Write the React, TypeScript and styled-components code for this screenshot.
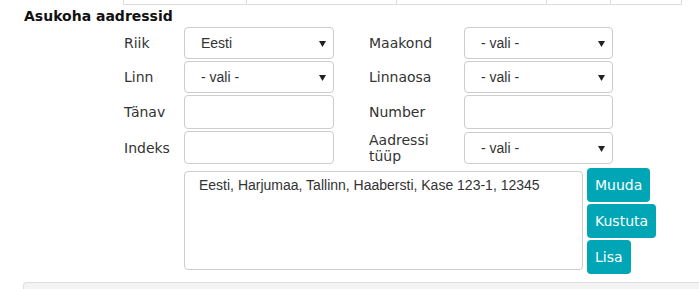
import React from 'react';
import styled, { createGlobalStyle } from 'styled-components';

const GlobalStyle = createGlobalStyle`
  html, body {
    margin: 0;
    padding: 0;
    background: #fff;
    font-family: 'DejaVu Sans', Verdana, sans-serif;
    color: #333;
  }
`;

const Page = styled.div`
  width: 699px;
  height: 289px;
  overflow: hidden;
`;

const TopTable = styled.div`
  display: flex;
  margin-left: 123px;
  width: 559px;
  height: 4px;
  border-bottom: 1px solid #ddd;
`;

const TopCell = styled.div<{ $w: number }>`
  width: ${(p) => p.$w}px;
  border-left: 1px solid #ddd;
  box-sizing: border-box;
  &:last-child {
    border-right: 1px solid #ddd;
  }
`;

const Heading = styled.h3`
  margin: 3px 0 0 24px;
  font-size: 14px;
  line-height: 17px;
  font-weight: bold;
  color: #111;
`;

const FormGrid = styled.div`
  display: grid;
  grid-template-columns: 60px 150px 35px 95px 149px;
  grid-template-rows: 32px 32px 34px 33px;
  row-gap: 2px;
  margin: 2px 0 0 124px;
`;

const Label = styled.label<{ $col: number }>`
  grid-column: ${(p) => p.$col};
  align-self: center;
  font-size: 14px;
  line-height: 16px;
  color: #333;
`;

const SelectWrap = styled.div<{ $col: number }>`
  grid-column: ${(p) => p.$col};
  position: relative;
  height: 32px;
  align-self: center;
`;

const Select = styled.select`
  appearance: none;
  -webkit-appearance: none;
  width: 100%;
  height: 100%;
  box-sizing: border-box;
  border: 1px solid #ccc;
  border-radius: 4px;
  background: #fff;
  padding: 0 0 0 16px;
  font-family: 'Liberation Sans', Arial, sans-serif;
  font-size: 14px;
  color: #333;
  outline: none;
`;

const Arrow = styled.svg`
  position: absolute;
  right: 8px;
  top: 13px;
  pointer-events: none;
`;

const TextInput = styled.input<{ $col: number }>`
  grid-column: ${(p) => p.$col};
  width: 100%;
  height: 100%;
  box-sizing: border-box;
  border: 1px solid #ccc;
  border-radius: 4px;
  outline: none;
  padding: 0 12px;
  font-family: 'Liberation Sans', Arial, sans-serif;
  font-size: 14px;
`;

const AddressRow = styled.div`
  display: flex;
  gap: 4px;
  margin: 4px 0 0 184px;
`;

const AddressBox = styled.textarea`
  width: 399px;
  height: 99px;
  margin-top: 3px;
  box-sizing: border-box;
  border: 1px solid #ccc;
  border-radius: 4px;
  padding: 5px 14px;
  resize: none;
  outline: none;
  font-family: 'Liberation Sans', Arial, sans-serif;
  font-size: 14px;
  line-height: 16px;
  color: #333;
`;

const ButtonColumn = styled.div`
  display: flex;
  flex-direction: column;
  align-items: flex-start;
  gap: 2px;
`;

const ActionButton = styled.button`
  height: 34px;
  padding: 0 8px;
  border: none;
  border-radius: 4px;
  background: #00a6b6;
  color: #fff;
  font-family: 'DejaVu Sans', Verdana, sans-serif;
  font-size: 14px;
  cursor: pointer;
`;

const BottomPanel = styled.div`
  margin: 8px 0 0 23px;
  height: 40px;
  background: #f3f3f3;
  border: 1px solid #ddd;
  border-right: none;
  border-radius: 4px 0 0 0;
`;

const DropSelect = ({ col, value }: { col: number; value: string }) => (
  <SelectWrap $col={col}>
    <Select defaultValue={value}>
      <option>{value}</option>
    </Select>
    <Arrow width="7" height="7" viewBox="0 0 7 7">
      <path d="M0 1 L7 1 L3.5 7 Z" fill="#222" />
    </Arrow>
  </SelectWrap>
);

const App = () => {
  return (
    <Page>
      <GlobalStyle />
      <TopTable>
        <TopCell $w={123} />
        <TopCell $w={150} />
        <TopCell $w={150} />
        <TopCell $w={64} />
        <TopCell $w={72} />
      </TopTable>
      <Heading>Asukoha aadressid</Heading>
      <FormGrid>
        <Label $col={1}>Riik</Label>
        <DropSelect col={2} value="Eesti" />
        <Label $col={4}>Maakond</Label>
        <DropSelect col={5} value="- vali -" />

        <Label $col={1}>Linn</Label>
        <DropSelect col={2} value="- vali -" />
        <Label $col={4}>Linnaosa</Label>
        <DropSelect col={5} value="- vali -" />

        <Label $col={1}>Tänav</Label>
        <TextInput $col={2} type="text" />
        <Label $col={4}>Number</Label>
        <TextInput $col={5} type="text" />

        <Label $col={1}>Indeks</Label>
        <TextInput $col={2} type="text" />
        <Label $col={4}>
          Aadressi
          <br />
          tüüp
        </Label>
        <DropSelect col={5} value="- vali -" />
      </FormGrid>
      <AddressRow>
        <AddressBox readOnly defaultValue="Eesti, Harjumaa, Tallinn, Haabersti, Kase 123-1, 12345" />
        <ButtonColumn>
          <ActionButton>Muuda</ActionButton>
          <ActionButton>Kustuta</ActionButton>
          <ActionButton>Lisa</ActionButton>
        </ButtonColumn>
      </AddressRow>
      <BottomPanel />
    </Page>
  );
};

export default App;
